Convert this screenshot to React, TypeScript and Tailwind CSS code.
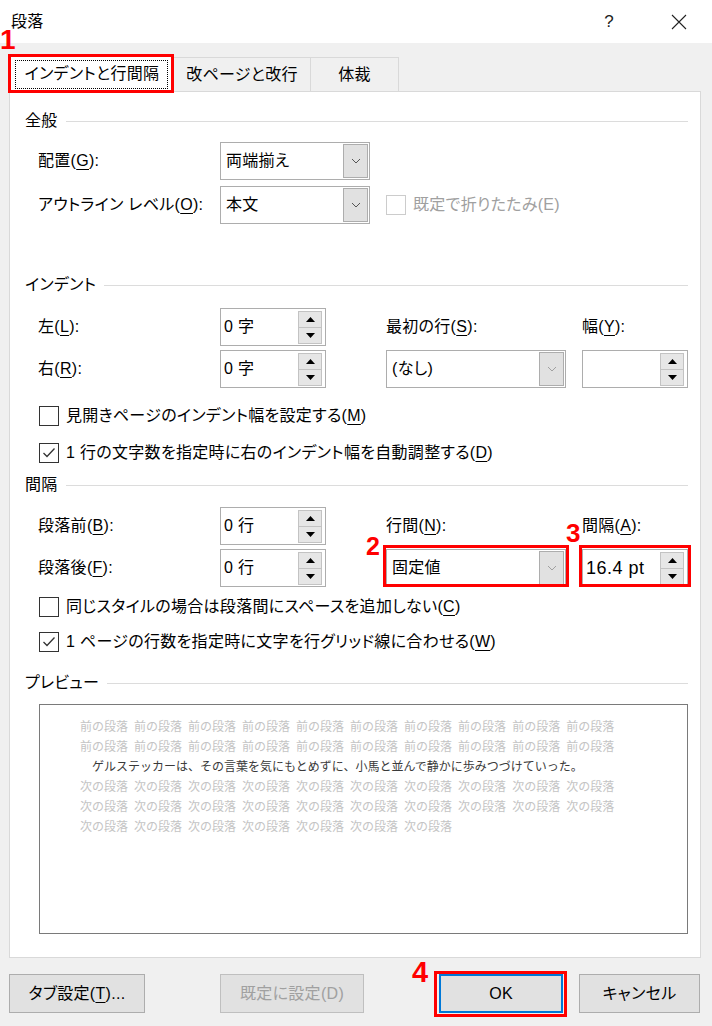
import React from "react";

const U = ({ children }: { children: React.ReactNode }) => (
  <span className="underline decoration-1 underline-offset-[3px]">{children}</span>
);

function Chevron({ light }: { light?: boolean }) {
  return (
    <svg width="10" height="6" viewBox="0 0 10 6">
      <polyline points="1,1 5,5 9,1" fill="none" stroke={light ? "#a0a0a0" : "#555555"} strokeWidth="1" />
    </svg>
  );
}

function Dropdown({ value, className, light }: { value: string; className: string; light?: boolean }) {
  return (
    <div className={`flex h-[38px] border border-[#adadad] bg-white ${className}`}>
      <div className="flex flex-1 items-center pl-[5px]">{value}</div>
      <div className="m-px flex w-[25px] items-center justify-center border border-[#adadad] bg-[#e1e1e1]">
        <Chevron light={light} />
      </div>
    </div>
  );
}

function SpinBtn({ up }: { up?: boolean }) {
  return (
    <div className="flex h-[17px] w-[24px] items-center justify-center border border-[#c3c3c3] bg-[#e6e6e6]">
      <svg width="9" height="5" viewBox="0 0 9 5">
        <polygon points={up ? "0,5 9,5 4.5,0" : "0,0 9,0 4.5,5"} fill="#000000" />
      </svg>
    </div>
  );
}

function Spinner({ value, className, valueClass }: { value: string; className: string; valueClass?: string }) {
  return (
    <div className={`flex h-[38px] border border-[#adadad] bg-white ${className}`}>
      <div className={`flex flex-1 items-center pl-[3px] ${valueClass ?? ""}`}>{value}</div>
      <div className="flex flex-col justify-center pr-[3px]">
        <SpinBtn up />
        <div className="-mt-px">
          <SpinBtn />
        </div>
      </div>
    </div>
  );
}

function Checkbox({
  checked,
  disabled,
  children,
  className,
}: {
  checked?: boolean;
  disabled?: boolean;
  children: React.ReactNode;
  className?: string;
}) {
  return (
    <div className={`flex h-[20px] items-center ${className ?? ""}`}>
      <div
        className={`flex h-[20px] w-[20px] shrink-0 items-center justify-center border bg-white ${
          disabled ? "border-[#cccccc]" : "border-[#333333]"
        }`}
      >
        {checked && (
          <svg width="14" height="12" viewBox="0 0 14 12">
            <polyline points="1.5,6 5,9.5 12.5,1.5" fill="none" stroke="#333333" strokeWidth="1.3" />
          </svg>
        )}
      </div>
      <span className={`ml-[7px] whitespace-nowrap ${disabled ? "text-[#a0a0a0]" : ""}`}>{children}</span>
    </div>
  );
}

function Header({ children, className }: { children: React.ReactNode; className: string }) {
  return (
    <div className={`flex h-[20px] items-center ${className}`}>
      <span className="whitespace-nowrap">{children}</span>
      <div className="ml-[8px] h-px flex-1 bg-[#dcdcdc]" />
    </div>
  );
}

function PreviewLine({ word, count }: { word: string; count: number }) {
  return (
    <div className="flex h-[20px] items-center gap-[6px] text-[#c4c4c4]">
      {Array.from({ length: count }).map((_, i) => (
        <span key={i}>{word}</span>
      ))}
    </div>
  );
}

export default function App() {
  return (
    <div className="relative h-[1026px] w-[712px] overflow-hidden bg-[#f0f0f0] font-['Liberation_Sans','Noto_Sans_CJK_JP',sans-serif] text-[16px] tracking-[0.3px] text-black [font-feature-settings:'palt']">
      {/* Title bar */}
      <div className="flex h-[43px] items-center bg-white pr-[25px] pl-[11px]">
        <span className="text-[16px]">段落</span>
        <span className="ml-auto text-[17px] text-[#222]">?</span>
        <svg className="ml-[57px]" width="16" height="16" viewBox="0 0 16 16">
          <path d="M1 1 L15 15 M15 1 L1 15" stroke="#222222" strokeWidth="1.1" fill="none" />
        </svg>
      </div>

      {/* Tabs */}
      <div className="flex h-[48px] items-end pl-[10px]">
        <div className="relative z-10 -mb-px flex h-[37px] w-[164px] items-center justify-center border border-b-0 border-[#d9d9d9] bg-white">
          <div className="absolute top-[4px] right-[5px] bottom-[3px] left-[4px] border border-dotted border-black" />
          インデントと行間隔
        </div>
        <div className="flex h-[34px] w-[137px] items-center justify-center border border-b-0 border-l-0 border-[#d9d9d9]">
          改ページと改行
        </div>
        <div className="flex h-[34px] w-[88px] items-center justify-center border border-b-0 border-l-0 border-[#d9d9d9]">
          体裁
        </div>
      </div>

      {/* Panel */}
      <div className="mr-[11px] ml-[9px] h-[867px] border border-[#d9d9d9] bg-white pr-[12px] pl-[15px]">
        <Header className="mt-[19px]">全般</Header>
        <div className="mt-[11px] flex items-center pl-[13px]">
          <div className="w-[182px] whitespace-nowrap">
            配置(<U>G</U>):
          </div>
          <Dropdown value="両端揃え" className="w-[150px]" />
        </div>
        <div className="mt-[6px] flex items-center pl-[13px]">
          <div className="w-[182px] whitespace-nowrap">
            アウトライン レベル(<U>O</U>):
          </div>
          <Dropdown value="本文" className="w-[150px]" />
          <Checkbox disabled className="ml-[16px]">
            既定で折りたたみ(E)
          </Checkbox>
        </div>

        <Header className="mt-[51px]">インデント</Header>
        <div className="mt-[13px] flex items-center pl-[13px]">
          <div className="w-[182px] whitespace-nowrap">
            左(<U>L</U>):
          </div>
          <Spinner value="0 字" className="w-[106px]" />
          <div className="ml-[60px] w-[196px] whitespace-nowrap">
            最初の行(<U>S</U>):
          </div>
          <div className="whitespace-nowrap">
            幅(<U>Y</U>):
          </div>
        </div>
        <div className="mt-[4px] flex items-center pl-[13px]">
          <div className="w-[182px] whitespace-nowrap">
            右(<U>R</U>):
          </div>
          <Spinner value="0 字" className="w-[106px]" />
          <Dropdown value="(なし)" className="ml-[60px] w-[180px]" light />
          <Spinner value="" className="ml-[16px] w-[106px]" />
        </div>
        <Checkbox className="mt-[18px] ml-[14px]">
          見開きページのインデント幅を設定する(<U>M</U>)
        </Checkbox>
        <Checkbox checked className="mt-[17px] ml-[14px]">
          1 行の文字数を指定時に右のインデント幅を自動調整する(<U>D</U>)
        </Checkbox>

        <Header className="mt-[12px]">間隔</Header>
        <div className="mt-[12px] flex items-center pl-[13px]">
          <div className="w-[182px] whitespace-nowrap">
            段落前(<U>B</U>):
          </div>
          <Spinner value="0 行" className="w-[106px]" />
          <div className="ml-[60px] w-[196px] whitespace-nowrap">
            行間(<U>N</U>):
          </div>
          <div className="whitespace-nowrap">
            間隔(<U>A</U>):
          </div>
        </div>
        <div className="mt-[4px] flex items-center pl-[13px]">
          <div className="w-[182px] whitespace-nowrap">
            段落後(<U>F</U>):
          </div>
          <Spinner value="0 行" className="w-[106px]" />
          <Dropdown value="固定値" className="ml-[60px] w-[180px]" light />
          <Spinner value="16.4 pt" className="ml-[16px] w-[106px]" valueClass="text-[18px] tracking-[0.5px]" />
        </div>
        <Checkbox className="mt-[10px] ml-[14px]">
          同じスタイルの場合は段落間にスペースを追加しない(<U>C</U>)
        </Checkbox>
        <Checkbox checked className="mt-[15px] ml-[14px]">
          1 ページの行数を指定時に文字を行グリッド線に合わせる(<U>W</U>)
        </Checkbox>

        <Header className="mt-[21px]">プレビュー</Header>
        <div className="mt-[11px] ml-[14px] h-[230px] border border-[#7a7a7a] bg-white pt-[11px] pl-[40px] font-['Noto_Sans_CJK_JP',sans-serif] text-[12px] leading-[20px] tracking-normal [font-feature-settings:normal]">
          <PreviewLine word="前の段落" count={10} />
          <PreviewLine word="前の段落" count={10} />
          <div className="flex h-[20px] items-center pl-[12px] text-[#3a3a3a]">
            ゲルステッカーは、その言葉を気にもとめずに、小馬と並んで静かに歩みつづけていった。
          </div>
          <PreviewLine word="次の段落" count={10} />
          <PreviewLine word="次の段落" count={10} />
          <PreviewLine word="次の段落" count={7} />
        </div>
      </div>

      {/* Buttons */}
      <div className="mt-[16px] flex pl-[9px]">
        <div className="flex h-[39px] w-[136px] items-center justify-center border border-[#adadad] bg-[#e1e1e1]">
          タブ設定(<U>T</U>)...
        </div>
        <div className="ml-[75px] flex h-[39px] w-[144px] items-center justify-center border border-[#bfbfbf] bg-[#e1e1e1] text-[#a0a0a0]">
          既定に設定(D)
        </div>
        <div className="ml-[75px] flex h-[39px] w-[124px] items-center justify-center border-2 border-[#0078d7] bg-[#e1e1e1]">
          OK
        </div>
        <div className="ml-[16px] flex h-[39px] w-[121px] items-center justify-center border border-[#adadad] bg-[#e1e1e1]">
          キャンセル
        </div>
      </div>

      {/* Annotations */}
      <div className="absolute top-[26px] left-[0px] z-20 text-[28px] leading-none font-bold text-[#ff0000]">1</div>
      <div className="absolute top-[54px] left-[8px] z-20 h-[39px] w-[166px] border-[3px] border-[#ff0000]" />
      <div className="absolute top-[534px] left-[366px] z-20 text-[25px] leading-none font-bold text-[#ff0000]">2</div>
      <div className="absolute top-[545px] left-[383px] z-20 h-[42px] w-[186px] border-[3px] border-[#ff0000]" />
      <div className="absolute top-[520px] left-[566px] z-20 text-[26px] leading-none font-bold text-[#ff0000]">3</div>
      <div className="absolute top-[545px] left-[579px] z-20 h-[42px] w-[112px] border-[3px] border-[#ff0000]" />
      <div className="absolute top-[958px] left-[412px] z-20 text-[29px] leading-none font-bold text-[#ff0000]">4</div>
      <div className="absolute top-[971px] left-[434px] z-20 h-[46px] w-[133px] border-[3px] border-[#ff0000]" />
    </div>
  );
}
